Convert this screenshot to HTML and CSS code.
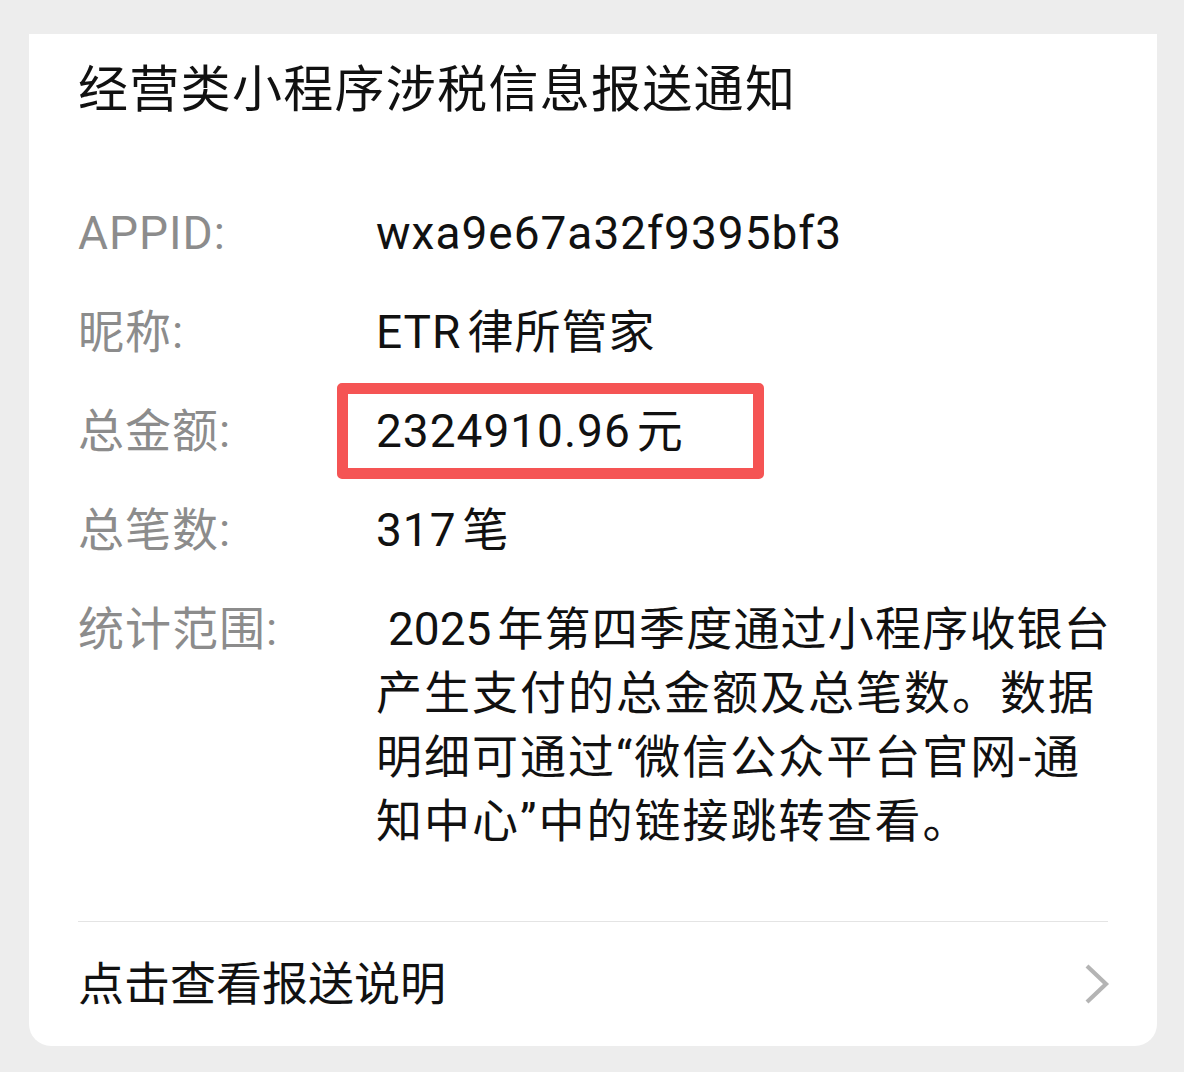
FILE: index.html
```html
<!DOCTYPE html>
<html lang="zh-CN">
<head>
<meta charset="utf-8">
<title>经营类小程序涉税信息报送通知</title>
<link rel="stylesheet" href="styles.css">
</head>
<body>
<div class="card">
  <h1 class="title">经营类小程序涉税信息报送通知</h1>
  <div class="rows">
    <div class="row">
      <div class="label">APPID:</div>
      <div class="value">wxa9e67a32f9395bf3</div>
    </div>
    <div class="row">
      <div class="label">昵称:</div>
      <div class="value">ETR<span class="ws"></span>律所管家</div>
    </div>
    <div class="row">
      <div class="label">总金额:</div>
      <div class="value highlight">2324910.96<span class="ws"></span>元<span class="mark"></span></div>
    </div>
    <div class="row">
      <div class="label">总笔数:</div>
      <div class="value">317<span class="ws"></span>笔</div>
    </div>
    <div class="row">
      <div class="label">统计范围:</div>
      <div class="value desc"><span class="num">2025</span><span class="ws"></span><span class="tight">年第四季度通过小程序收银台</span><br>产生支付的总金额及总笔数。数据<br>明细可通过“微信公众平台官网-通<br>知中心”中的链接跳转查看。</div>
    </div>
  </div>
  <div class="divider"></div>
  <div class="footer">
    <span class="footer-text">点击查看报送说明</span>
    <svg class="chevron" width="26" height="42" viewBox="0 0 26 42" aria-hidden="true">
      <path d="M3 3 L22 21 L3 39" fill="none" stroke="#b4b4b4" stroke-width="4.2" stroke-linejoin="miter"/>
    </svg>
  </div>
</div>
</body>
</html>
```
FILE: styles.css
```css
html, body {
  margin: 0;
  padding: 0;
  background: #ededed;
}
body {
  font-family: Roboto, "Noto Sans CJK SC", sans-serif;
  color: #111111;
}
.card {
  margin: 34px 27px 0 29px;
  width: 1128px;
  box-sizing: border-box;
  background: #ffffff;
  border-radius: 0 0 22px 22px;
  padding: 0 49px;
}
.title {
  margin: 0;
  padding-top: 26px;
  font-size: 50px;
  font-weight: 400;
  line-height: 60px;
  letter-spacing: 1.3px;
  color: #111111;
}
.rows {
  margin-top: 81px;
  display: flex;
  flex-direction: column;
  gap: 35px;
}
.row {
  display: flex;
  align-items: flex-start;
}
.label {
  width: 298px;
  flex: none;
  font-size: 46px;
  line-height: 64px;
  letter-spacing: 1px;
  color: #8c8c8c;
}
.value {
  flex: 1;
  min-width: 0;
  font-size: 46px;
  line-height: 64px;
  letter-spacing: 1px;
  color: #111111;
}
.ws {
  display: inline-block;
  width: 6px;
}
.highlight {
  position: relative;
}
.mark {
  position: absolute;
  left: -39px;
  top: -16px;
  width: 427px;
  height: 96px;
  box-sizing: border-box;
  border: 11px solid #f55454;
  border-radius: 5px;
}
.desc {
  margin-right: -30px;
  text-indent: 12px;
  letter-spacing: 2px;
  white-space: nowrap;
}
.num {
  letter-spacing: 0;
}
.tight {
  letter-spacing: 1.2px;
}
.divider {
  margin-top: 68px;
  height: 1px;
  background: #e4e4e4;
}
.footer {
  height: 124px;
  display: flex;
  align-items: center;
  justify-content: space-between;
}
.footer-text {
  font-size: 46px;
  line-height: 60px;
  color: #111111;
}
.chevron {
  flex: none;
  margin-right: -2px;
}
```
